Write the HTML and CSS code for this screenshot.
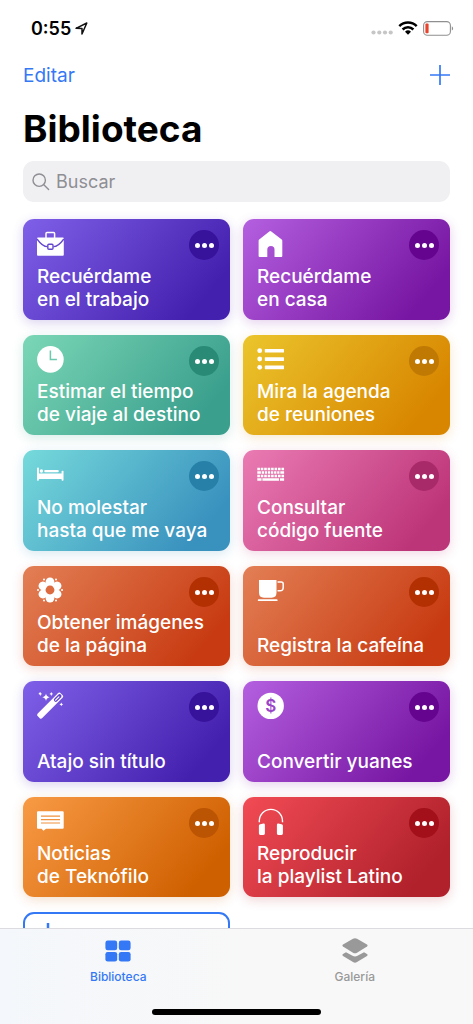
FILE: index.html
```html
<!DOCTYPE html>
<html lang="es">
<head>
<meta charset="utf-8">
<meta name="viewport" content="width=device-width, initial-scale=1">
<title>Biblioteca</title>
<link rel="stylesheet" href="styles.css">
</head>
<body>
<div class="status">
  <div class="status-left">
    <time>0:55</time>
    <svg width="13" height="13" viewBox="0 0 13 13" aria-hidden="true"><path d="M1 6.3 11.8 1 7 12V6.5Z" fill="none" stroke="#111" stroke-width="1.5" stroke-linejoin="round"/></svg>
  </div>
  <div class="status-right">
    <svg class="dots" width="22" height="5" viewBox="0 0 22 5" aria-hidden="true"><g fill="#c6c6c6"><circle cx="2.5" cy="2.5" r="2.1"/><circle cx="8.3" cy="2.5" r="2.1"/><circle cx="14" cy="2.5" r="2.1"/><circle cx="19.7" cy="2.5" r="2.1"/></g></svg>
    <svg width="20" height="14" viewBox="0 0 20 14" aria-hidden="true"><g fill="none" stroke="#000" stroke-width="2.5"><path d="M1.3 5.1a12.4 12.4 0 0 1 17.4 0"/><path d="M4.6 8.5a7.6 7.6 0 0 1 10.8 0"/></g><path d="M7 10.7a4.3 4.3 0 0 1 6 0L10 13.8Z"/></svg>
    <svg width="31" height="15" viewBox="0 0 31 15" aria-hidden="true"><rect x=".6" y=".6" width="26.8" height="13.6" rx="3.8" fill="none" stroke="#8f8f8f" stroke-width="1.1"/><rect x="2.4" y="2.6" width="3.2" height="9.6" rx="1" fill="#e8432e"/><path d="M28.8 5.2c1.8.8 1.8 3.6 0 4.4Z" fill="#8f8f8f"/></svg>
  </div>
</div>

<main class="content">
  <header class="nav">
    <button class="edit" type="button">Editar</button>
    <button class="add" type="button" aria-label="Añadir"><svg width="20" height="20" viewBox="0 0 20 20"><path d="M10 0v20M0 10h20" stroke="#3478f6" stroke-width="1.7"/></svg></button>
  </header>
  <h1>Biblioteca</h1>
  <label class="search">
    <svg width="18" height="18" viewBox="0 0 18 18" aria-hidden="true"><g fill="none" stroke="#8e8e93" stroke-width="1.4" stroke-linecap="round"><circle cx="7.2" cy="7.2" r="6.2"/><path d="m11.8 11.8 4.8 4.6"/></g></svg>
    <input type="search" placeholder="Buscar" aria-label="Buscar">
  </label>

  <ul class="grid">
    <li class="tile indigo">
      <svg class="icon" viewBox="0 0 28 30"><path d="M9 8V3.6Q9 2.6 10 2.6h6.6q1 0 1 1V8" fill="none" stroke="#fff" stroke-width="1.5"/><rect y="7.5" width="26.8" height="18.3" rx="1" fill="#fff"/><path d="M0 9c4 5.600 6.500 7.700 10.400 7.700M26.800 9c-4 5.600-6.500 7.700-10.400 7.700" fill="none" stroke="#6547cf" stroke-width="1.3"/><rect x="10.800" y="14.200" width="5.200" height="5" rx="1" fill="#fff" stroke="#6547cf" stroke-width="1.400"/></svg>
      <button class="more" type="button" aria-label="Más opciones"><i></i><i></i><i></i></button>
      <button class="run" type="button">Recuérdame<br>en el trabajo</button>
    </li>
    <li class="tile purple">
      <svg class="icon" viewBox="0 0 28 30"><path d="M12.300 1.400q1-.8 2 0L24.700 9.500q.6.500.6 1.300V26q0 1-1 1h-6.800v-7.500a3.600 3.600 0 0 0-7.200 0V27H2.600q-1 0-1-1V10.800q0-.8.600-1.300Z" fill="#fff"/></svg>
      <button class="more" type="button" aria-label="Más opciones"><i></i><i></i><i></i></button>
      <button class="run" type="button">Recuérdame<br>en casa</button>
    </li>
    <li class="tile green">
      <svg class="icon" viewBox="0 0 28 30"><circle cx="13.400" cy="13.400" r="13.300" fill="#fff"/><path d="M13.400 4.500v9h6.500" fill="none" stroke="#6bcaad" stroke-width="1.500"/></svg>
      <button class="more" type="button" aria-label="Más opciones"><i></i><i></i><i></i></button>
      <button class="run" type="button">Estimar el tiempo<br>de viaje al destino</button>
    </li>
    <li class="tile yellow">
      <svg class="icon" viewBox="0 0 28 30"><g fill="#fff"><circle cx="2.700" cy="4.700" r="2.400"/><circle cx="2.700" cy="13" r="2.400"/><circle cx="2.700" cy="21.300" r="2.400"/><rect x="7.800" y="2.900" width="19.200" height="3.700" rx=".6"/><rect x="7.800" y="11.200" width="19.200" height="3.700" rx=".6"/><rect x="7.800" y="19.500" width="19.200" height="3.700" rx=".6"/></g></svg>
      <button class="more" type="button" aria-label="Más opciones"><i></i><i></i><i></i></button>
      <button class="run" type="button">Mira la agenda<br>de reuniones</button>
    </li>
    <li class="tile cyan">
      <svg class="icon" viewBox="0 0 28 30"><g fill="#fff"><rect y="6.500" width="1.900" height="13.200" rx=".8"/><rect x="24.600" y="9.700" width="1.900" height="10" rx=".8"/><rect x="1" y="13" width="24.600" height="5"/><circle cx="4.400" cy="10" r="1.700"/><rect x="7.200" y="8.900" width="14.600" height="2.400" rx="1.200"/><path d="M1 12.200h24.500v.9H1z" opacity=".65"/></g></svg>
      <button class="more" type="button" aria-label="Más opciones"><i></i><i></i><i></i></button>
      <button class="run" type="button">No molestar<br>hasta que me vaya</button>
    </li>
    <li class="tile pink">
      <svg class="icon" viewBox="0 0 28 30"><g fill="none" stroke="#fff" stroke-width="2.700"><path d="M.3 8h26.800" stroke-dasharray="2.600 .85"/><path d="M.3 11.500h26.800" stroke-dasharray="3.600 .8 2.300 .8 2.300 .8 2.300 .8 2.300 .8 2.300 .8 2.300 .8 5"/><path d="M.3 15h26.800" stroke-dasharray="2.600 .85"/><path d="M.3 18.500h26.800" stroke-dasharray="4.200 .9 16.600 .9 4.200"/></g></svg>
      <button class="more" type="button" aria-label="Más opciones"><i></i><i></i><i></i></button>
      <button class="run" type="button">Consultar<br>código fuente</button>
    </li>
    <li class="tile rust">
      <svg class="icon" viewBox="0 0 28 30"><g fill="#fff" transform="translate(13 13)"><g><ellipse cy="-8" rx="4.400" ry="4.600"/><ellipse cy="-8" rx="4.400" ry="4.600" transform="rotate(60)"/><ellipse cy="-8" rx="4.400" ry="4.600" transform="rotate(120)"/><ellipse cy="-8" rx="4.400" ry="4.600" transform="rotate(180)"/><ellipse cy="-8" rx="4.400" ry="4.600" transform="rotate(240)"/><ellipse cy="-8" rx="4.400" ry="4.600" transform="rotate(300)"/></g><circle r="5.900" fill="none" stroke="#fff" stroke-width="3"/><g><circle cx="12" r="1"/><circle cx="-12" r="1"/><circle cx="6" cy="-10.400" r="1"/><circle cx="-6" cy="-10.400" r="1"/><circle cx="6" cy="10.400" r="1"/><circle cx="-6" cy="10.400" r="1"/></g><circle r="4.400" fill="#dd6b40"/></g></svg>
      <button class="more" type="button" aria-label="Más opciones"><i></i><i></i><i></i></button>
      <button class="run" type="button">Obtener imágenes<br>de la página</button>
    </li>
    <li class="tile rust">
      <svg class="icon" viewBox="0 0 28 30"><path d="M2 3h17.500v12.500q0 5.200-5 5.200H7q-5 0-5-5.200Z" fill="#fff"/><path d="M20.500 5h3.700q2 0 2 2v3.400q0 3.300-3.300 3.300h-2.400" fill="none" stroke="#fff" stroke-width="1.500"/><rect x=".8" y="22.200" width="19.800" height="1.900" rx=".9" fill="#fff"/></svg>
      <button class="more" type="button" aria-label="Más opciones"><i></i><i></i><i></i></button>
      <button class="run" type="button">Registra la cafeína</button>
    </li>
    <li class="tile indigo">
      <svg class="icon" viewBox="0 0 28 30"><g transform="translate(0 1)"><path d="M3 22.700 23 2.700" stroke="#fff" stroke-width="6.300" stroke-linecap="butt"/><path d="m1 20.200 4.500 4.500-1 .9q-.8.500-1.500-.2L.4 22.800q-.8-.8 0-1.600ZM20.500.6l1-.8q.8-.6 1.600 0l2.800 2.800q.7.800 0 1.600l-.8 1Z" fill="#fff"/><path d="m18.800 6.900 3.800-3.800" stroke="#6244cd" stroke-width="3.800" stroke-linecap="round"/><path d="m18.600 7.100 3.300-3.300" stroke="#fff" stroke-width="1.200" stroke-linecap="round"/><g fill="#fff"><path d="M9 .6q.5 3.200 3.700 3.700Q9.500 4.800 9 8 8.500 4.800 5.300 4.300 8.500 3.800 9 .6ZM3.300-.9q.3 1.600 1.900 1.900-1.600.3-1.900 1.900Q3 1.300 1.400 1 3-.7 3.300-.9ZM14.300-.9q.3 1.600 1.900 1.900-1.600.3-1.900 1.900-.3-1.600-1.900-1.900 1.600-.3 1.900-1.900ZM24.300 9.400q.3 1.600 1.900 1.900-1.600.3-1.900 1.900-.3-1.600-1.900-1.900 1.600-.3 1.900-1.900Z"/></g></g></svg>
      <button class="more" type="button" aria-label="Más opciones"><i></i><i></i><i></i></button>
      <button class="run" type="button">Atajo sin título</button>
    </li>
    <li class="tile purple">
      <svg class="icon" viewBox="0 0 28 30"><circle cx="13.700" cy="13.900" r="13.200" fill="#fff"/><text class="coin" x="13.700" y="20" text-anchor="middle">$</text></svg>
      <button class="more" type="button" aria-label="Más opciones"><i></i><i></i><i></i></button>
      <button class="run" type="button">Convertir yuanes</button>
    </li>
    <li class="tile orange">
      <svg class="icon" viewBox="0 0 28 30"><path d="M1 3.300h24.700q1 0 1 1v15.400q0 1-1 1H9L6.500 22.800 4.600 20.700H1q-1 0-1-1V4.300q0-1 1-1Z" fill="#fff"/><path d="M4 8.200h19M4 11.600h19M4 15h19" stroke="#f0913f" stroke-width="1.200"/></svg>
      <button class="more" type="button" aria-label="Más opciones"><i></i><i></i><i></i></button>
      <button class="run" type="button">Noticias<br>de Teknófilo</button>
    </li>
    <li class="tile red">
      <svg class="icon" viewBox="0 0 28 30"><g transform="translate(0 1)"><path d="M2.300 13.200V12a11.600 11.600 0 0 1 23.200 0v1.200" fill="none" stroke="#fff" stroke-width="1.400"/><path d="M3.300 15.200l3.200-.6q1.400-.1 1.400 1.200v8.800q0 1.300-1.400 1.300H3.300q-1.400 0-1.400-1.400v-8Q1.900 15.400 3.300 15.200ZM24.500 15.200l-3.200-.6q-1.400-.1-1.400 1.200v8.800q0 1.300 1.400 1.300h3.200q1.400 0 1.400-1.400v-8q0-1.100-1.400-1.300Z" fill="#fff"/></g></svg>
      <button class="more" type="button" aria-label="Más opciones"><i></i><i></i><i></i></button>
      <button class="run" type="button">Reproducir<br>la playlist Latino</button>
    </li>
    <li>
      <button class="create" type="button" aria-label="Crear atajo"><svg width="24" height="24" viewBox="0 0 24 24"><path d="M12 0v24M0 12h24" stroke="#3478f6" stroke-width="2.500"/></svg></button>
    </li>
  </ul>
</main>

<footer class="tabbar">
  <nav class="tabs">
    <a class="tab active" href="#biblioteca"><svg width="26" height="26" viewBox="0 0 26 26"><g fill="currentColor"><rect x=".4" y="2.600" width="11.800" height="9.700" rx="2.300"/><rect x="13.800" y="2.600" width="11.800" height="9.700" rx="2.300"/><rect x=".4" y="13.900" width="11.800" height="9.700" rx="2.300"/><rect x="13.800" y="13.900" width="11.800" height="9.700" rx="2.300"/></g></svg>Biblioteca</a>
    <a class="tab" href="#galeria"><svg width="26" height="26" viewBox="0 0 26 26"><g fill="currentColor"><path d="M11 .7q2-1 4 0l10 5.800q1.200.9 0 1.900L15 14.700q-2 1.100-4 0L1 8.400Q-.2 7.400 1 6.500Z"/><path d="M4 14.300l6.500 3.500q2.500 1.300 5 0l6.500-3.500 3 1.700q1.200 1 0 1.900l-10 6.200q-2 1.200-4 0l-10-6.200q-1.200-.9 0-1.900Z"/></g></svg>Galería</a>
  </nav>
  <div class="home-indicator"></div>
</footer>
</body>
</html>
```

FILE: styles.css
```css
* {
  box-sizing: border-box;
}

body {
  margin: 0;
  height: 100vh;
  display: flex;
  flex-direction: column;
  background: #fff;
  color: #000;
  font-family: Inter, "Liberation Sans", sans-serif;
}

button {
  border: 0;
  padding: 0;
  margin: 0;
  background: none;
  font: inherit;
  color: inherit;
  text-align: left;
}

svg {
  display: block;
  flex: none;
}

.status {
  display: flex;
  justify-content: space-between;
  align-items: center;
  height: 56px;
  padding: 0 19px 0 31px;
  flex: none;
}

.status-left {
  display: flex;
  align-items: center;
  gap: 4px;
  font-size: 18px;
  font-weight: 600;
}

.status-right {
  display: flex;
  align-items: center;
  gap: 5px;
}

.dots {
  margin-top: 9px;
}

.content {
  flex: 1;
  min-height: 0;
  overflow-y: auto;
  scrollbar-width: none;
  padding: 0 23px;
}

.nav {
  display: flex;
  justify-content: space-between;
  align-items: center;
  height: 38px;
}

.edit {
  color: #3478f6;
  font-size: 19px;
  line-height: 23px;
}

h1 {
  margin: 11px 0 8px;
  font-size: 37px;
  line-height: 48px;
  font-weight: 700;
}

.search {
  display: flex;
  align-items: center;
  gap: 6px;
  height: 41px;
  padding: 0 9px;
  border-radius: 11px;
  background: #f0f0f3;
}

.search input {
  flex: 1;
  min-width: 0;
  border: 0;
  padding: 0;
  background: none;
  outline: none;
  font: inherit;
  font-size: 18px;
  line-height: 23px;
}

.search input::placeholder {
  color: #8e8e93;
  opacity: 1;
}

.grid {
  display: grid;
  grid-template-columns: 1fr 1fr;
  grid-auto-rows: minmax(101px, auto) minmax(100px, auto);
  gap: 15px 13px;
  margin: 17px 0 24px;
  padding: 0;
  list-style: none;
}

.tile {
  display: grid;
  grid-template-columns: 1fr auto;
  grid-template-rows: 30px 1fr;
  padding: 11px 11px 9px 14px;
  border-radius: 11px;
  color: #fff;
  background: linear-gradient(130deg, var(--from), var(--to) 85%);
  box-shadow: 0 3px 12px var(--glow);
}

.icon {
  width: 28px;
  height: 30px;
  overflow: visible;
}

.more {
  display: flex;
  align-items: center;
  justify-content: center;
  gap: 2px;
  width: 30px;
  height: 30px;
  border-radius: 50%;
  background: var(--dot);
}

.more i {
  width: 5px;
  height: 5px;
  border-radius: 50%;
  background: #fff;
}

.run {
  grid-column: 1 / -1;
  align-self: end;
  font-size: 19px;
  line-height: 23px;
  font-weight: 500;
  white-space: nowrap;
}

.coin {
  font-size: 17px;
  font-weight: 600;
  fill: #9a45c8;
}

.indigo { --from: #7f60e8; --to: #4420ae; --dot: #37129b; --glow: #4420ae33; }
.purple { --from: #b45fe0; --to: #7716a2; --dot: #65058f; --glow: #7716a233; }
.green { --from: #7bd7b6; --to: #3a9f8d; --dot: #298b76; --glow: #3a9f8d33; }
.yellow { --from: #ebc52c; --to: #d88600; --dot: #c07a04; --glow: #d8860033; }
.cyan { --from: #76dadb; --to: #3991be; --dot: #2680a8; --glow: #3991be33; }
.pink { --from: #ea7bb3; --to: #bd3579; --dot: #a92a69; --glow: #bd357933; }
.rust { --from: #e37f55; --to: #c83b12; --dot: #b33002; --glow: #c83b1233; }
.orange { --from: #f89a45; --to: #cf6000; --dot: #bb5403; --glow: #cf600033; }
.red { --from: #f24b55; --to: #b0212b; --dot: #a31019; --glow: #b0212b33; }

.create {
  display: flex;
  align-items: flex-start;
  width: 100%;
  height: 100%;
  padding: 9px 11px;
  border: 2px solid #3478f6;
  border-radius: 11px;
}

.tabbar {
  flex: none;
  display: flex;
  flex-direction: column;
  align-items: center;
  justify-content: space-between;
  height: 96px;
  padding: 9px 0;
  border-top: 1px solid #dcdce0;
  background: linear-gradient(90deg, #f4f7fb, #f8f8f8 55%);
}

.tabs {
  display: flex;
  width: 100%;
}

.tab {
  flex: 1;
  display: flex;
  flex-direction: column;
  align-items: center;
  gap: 6px;
  color: #999;
  font-size: 12px;
  line-height: 14px;
  font-weight: 500;
  text-decoration: none;
}

.tab.active {
  color: #3478f6;
}

.home-indicator {
  width: 169px;
  height: 6px;
  border-radius: 3px;
  background: #000;
}
```
